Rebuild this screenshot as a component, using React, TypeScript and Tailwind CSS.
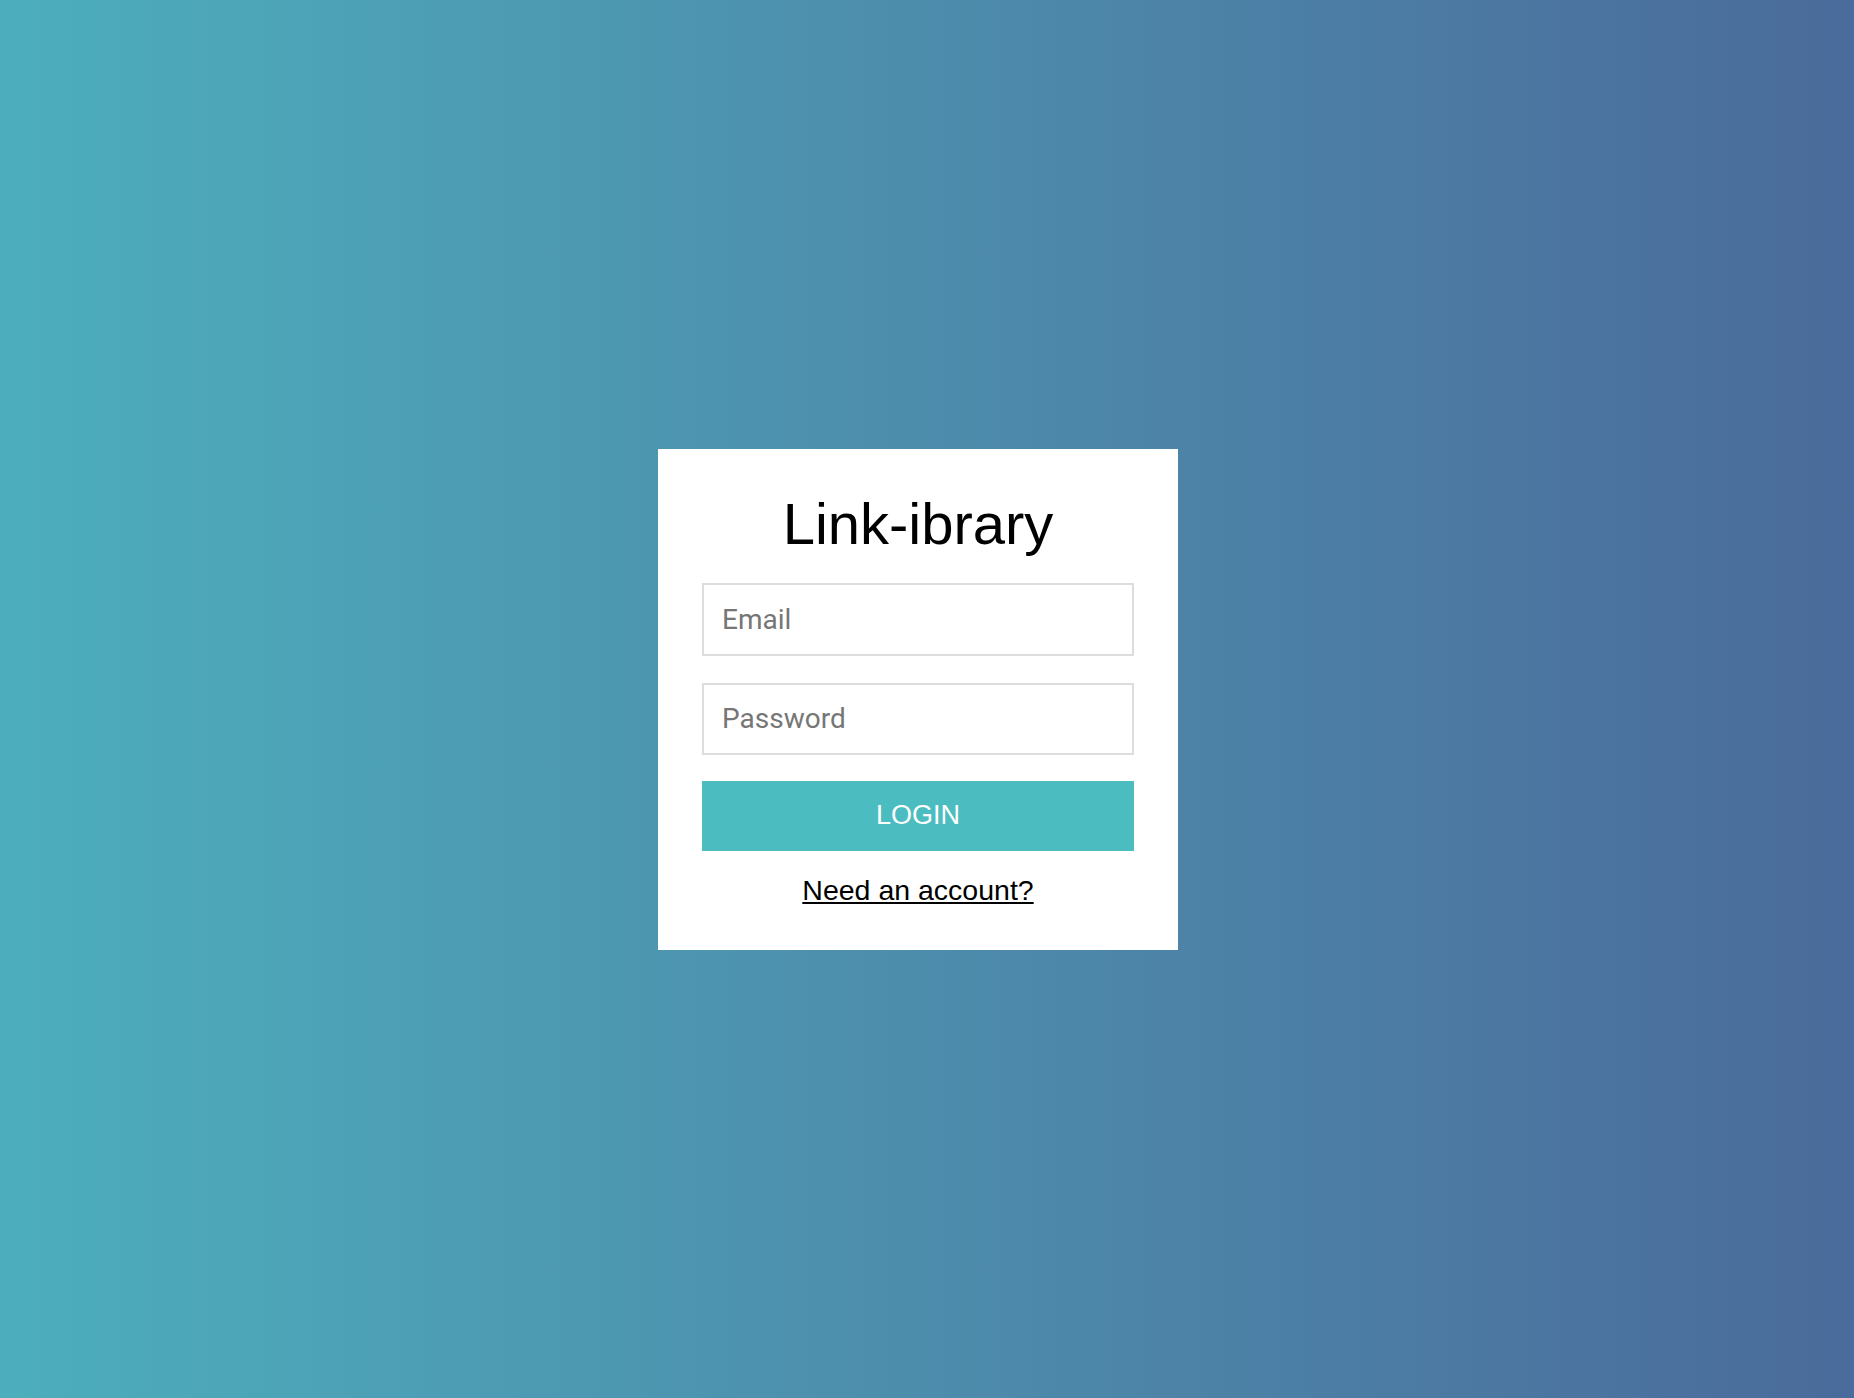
import { useState } from "react";

const Login = () => {
  const [email, setEmail] = useState("");
  const [password, setPassword] = useState("");

  const onSubmit = (e: React.FormEvent) => {
    e.preventDefault();
  };

  return (
    <div className="w-full min-h-screen bg-linear-to-r from-[#4caebc] to-[#4a6b9b] flex items-center justify-center pr-[18px]">
      <div className="w-[520px] bg-white px-[44px] pt-[46px] pb-[43px]">
        <h1 className="text-center text-[58px] leading-[58px] text-black font-['Liberation_Sans',Arial,sans-serif]">
          Link-ibrary
        </h1>
        <form onSubmit={onSubmit} className="mt-[30px] flex flex-col">
          <input
            type="email"
            value={email}
            onChange={(e) => setEmail(e.target.value)}
            placeholder="Email"
            className="h-[73px] w-full border-2 border-[#dddddd] px-[18px] text-[28px] text-gray-700 placeholder:text-[#767676] outline-none font-['Roboto',sans-serif]"
          />
          <input
            type="password"
            value={password}
            onChange={(e) => setPassword(e.target.value)}
            placeholder="Password"
            className="mt-[27px] h-[72px] w-full border-2 border-[#dddddd] px-[18px] text-[28px] text-gray-700 placeholder:text-[#767676] outline-none font-['Roboto',sans-serif]"
          />
          <button
            type="submit"
            className="mt-[26px] h-[70px] w-full bg-[#4bbdc0] text-white text-[27px] cursor-pointer font-['Liberation_Sans',Arial,sans-serif]"
          >
            LOGIN
          </button>
        </form>
        <div className="mt-[23px] text-center text-[28.5px] leading-[33px] font-['Liberation_Sans',Arial,sans-serif]">
          <a href="#" className="text-black underline">
            Need an account?
          </a>
        </div>
      </div>
    </div>
  );
};

export default function App() {
  return <Login />;
}
